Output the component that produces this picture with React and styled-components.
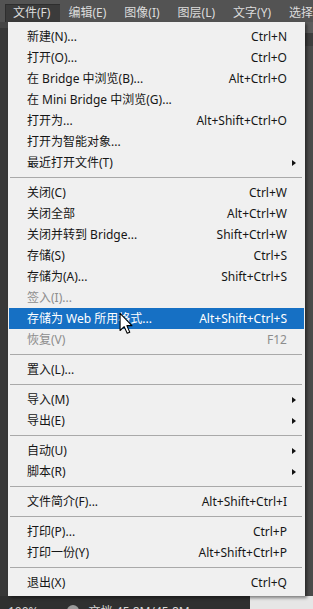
import React from "react";
import styled, { createGlobalStyle } from "styled-components";

const GlobalStyle = createGlobalStyle`
    body {
        margin: 0;
        background: #3a3a3a;
        font-family: "Noto Sans", "Noto Sans CJK SC", sans-serif;
    }
`;

const Screen = styled.div`
    position: relative;
    width: 313px;
    height: 609px;
    overflow: hidden;
    display: flex;
    flex-direction: column;
    background: #3a3a3a;
    font-size: 12px;
`;

const MenuBar = styled.div`
    height: 22px;
    display: flex;
    align-items: flex-end;
    padding-left: 5px;
    background: #535353;
    flex-shrink: 0;
`;

const MenuTitle = styled.div`
    height: 18px;
    line-height: 18px;
    padding: 0 10px 0 8px;
    color: #dcdcdc;
    white-space: nowrap;
    background: ${props => props.active ? "#3b3b3b" : "transparent"};
    box-shadow: ${props => props.active ? "inset 0 1px 0 #2e2e2e, inset 1px 0 0 #2e2e2e" : "none"};
`;

const Workspace = styled.div`
    display: flex;
    height: 574px;
    flex-shrink: 0;
`;

const LeftStrip = styled.div`
    width: 8px;
    background: #383838;
    box-shadow: inset 0 6px 0 #454545;
`;

const Dropdown = styled.div`
    position: relative;
    z-index: 1;
    width: 297px;
    box-sizing: border-box;
    padding: 4px 1px 3px;
    background: #f0f0f0;
    box-shadow: 2px 2px 3px rgba(0,0,0,0.45);
`;

const RightArea = styled.div`
    flex: 1;
    background: linear-gradient(#5c5c5c 0 11px, #3e3e3e 11px 24px, #4a4a4a 24px);
`;

const Row = styled.div`
    display: grid;
    grid-template-columns: 1fr auto 17px;
    align-items: center;
    height: 21px;
    line-height: 21px;
    padding-left: 18px;
    white-space: nowrap;
    color: ${props => props.selected ? "#ffffff" : props.disabled ? "#8d8d8d" : "#161616"};
    background: ${props => props.selected ? "#1670c4" : "transparent"};
`;

const Shortcut = styled.span`
    text-align: right;
`;

const Arrow = styled.span`
    justify-self: start;
    margin-left: 5px;
    width: 0;
    height: 0;
    border-top: 3.5px solid transparent;
    border-bottom: 3.5px solid transparent;
    border-left: 4px solid #111111;
`;

const Separator = styled.div`
    height: 9px;
    display: flex;
    align-items: center;
    margin: 0 2px 0 1px;
    &::after {
        content: "";
        flex: 1;
        height: 1px;
        background: #a9a9a9;
    }
`;

const Cursor = styled.svg`
    position: absolute;
    left: 111px;
    top: 290px;
    width: 14px;
    height: 23px;
`;

const StatusBar = styled.div`
    flex: 1;
    display: flex;
    align-items: flex-start;
    gap: 10px;
    padding: 9px 0 0 8px;
    overflow: hidden;
    color: #d8d8d8;
    font-size: 12px;
    line-height: 14px;
    background: linear-gradient(90deg, #303030 0 250px, #e6e6e6 250px);
`;

const Dot = styled.span`
    width: 12px;
    height: 12px;
    border-radius: 50%;
    background: #9a9a9a;
    margin-left: 18px;
`;

const MENU_TITLES = ["文件(F)", "编辑(E)", "图像(I)", "图层(L)", "文字(Y)", "选择"];

const GROUPS = [
    [
        { label: "新建(N)...", key: "Ctrl+N" },
        { label: "打开(O)...", key: "Ctrl+O" },
        { label: "在 Bridge 中浏览(B)...", key: "Alt+Ctrl+O" },
        { label: "在 Mini Bridge 中浏览(G)..." },
        { label: "打开为...", key: "Alt+Shift+Ctrl+O" },
        { label: "打开为智能对象..." },
        { label: "最近打开文件(T)", sub: true },
    ],
    [
        { label: "关闭(C)", key: "Ctrl+W" },
        { label: "关闭全部", key: "Alt+Ctrl+W" },
        { label: "关闭并转到 Bridge...", key: "Shift+Ctrl+W" },
        { label: "存储(S)", key: "Ctrl+S" },
        { label: "存储为(A)...", key: "Shift+Ctrl+S" },
        { label: "签入(I)...", disabled: true },
        { label: "存储为 Web 所用格式...", key: "Alt+Shift+Ctrl+S", selected: true },
        { label: "恢复(V)", key: "F12", disabled: true },
    ],
    [{ label: "置入(L)..." }],
    [
        { label: "导入(M)", sub: true },
        { label: "导出(E)", sub: true },
    ],
    [
        { label: "自动(U)", sub: true },
        { label: "脚本(R)", sub: true },
    ],
    [{ label: "文件简介(F)...", key: "Alt+Shift+Ctrl+I" }],
    [
        { label: "打印(P)...", key: "Ctrl+P" },
        { label: "打印一份(Y)", key: "Alt+Shift+Ctrl+P" },
    ],
    [{ label: "退出(X)", key: "Ctrl+Q" }],
];

const MenuRow = ({ item }) => (
    <Row selected={item.selected} disabled={item.disabled}>
        <span>{item.label}</span>
        <Shortcut>{item.key}</Shortcut>
        {item.sub ? <Arrow /> : <span />}
    </Row>
);

const App = () => (
    <>
        <GlobalStyle />
        <Screen>
            <MenuBar>
                {MENU_TITLES.map((t, i) => (
                    <MenuTitle key={t} active={i === 0}>{t}</MenuTitle>
                ))}
            </MenuBar>
            <Workspace>
                <LeftStrip />
                <Dropdown>
                    {GROUPS.map((group, gi) => (
                        <React.Fragment key={gi}>
                            {gi > 0 && <Separator />}
                            {group.map(item => <MenuRow key={item.label} item={item} />)}
                        </React.Fragment>
                    ))}
                    <Cursor viewBox="0 0 13 21">
                        <path d="M1 1 L1 17 L4.8 13.4 L7.6 19.6 L10 18.6 L7.3 12.5 L12 12.5 Z" fill="#ffffff" stroke="#000000" strokeWidth="1" strokeLinejoin="round" />
                    </Cursor>
                </Dropdown>
                <RightArea />
            </Workspace>
            <StatusBar>
                <span>100%</span>
                <Dot />
                <span>文档:45.8M/45.8M</span>
            </StatusBar>
        </Screen>
    </>
);

export default App;
